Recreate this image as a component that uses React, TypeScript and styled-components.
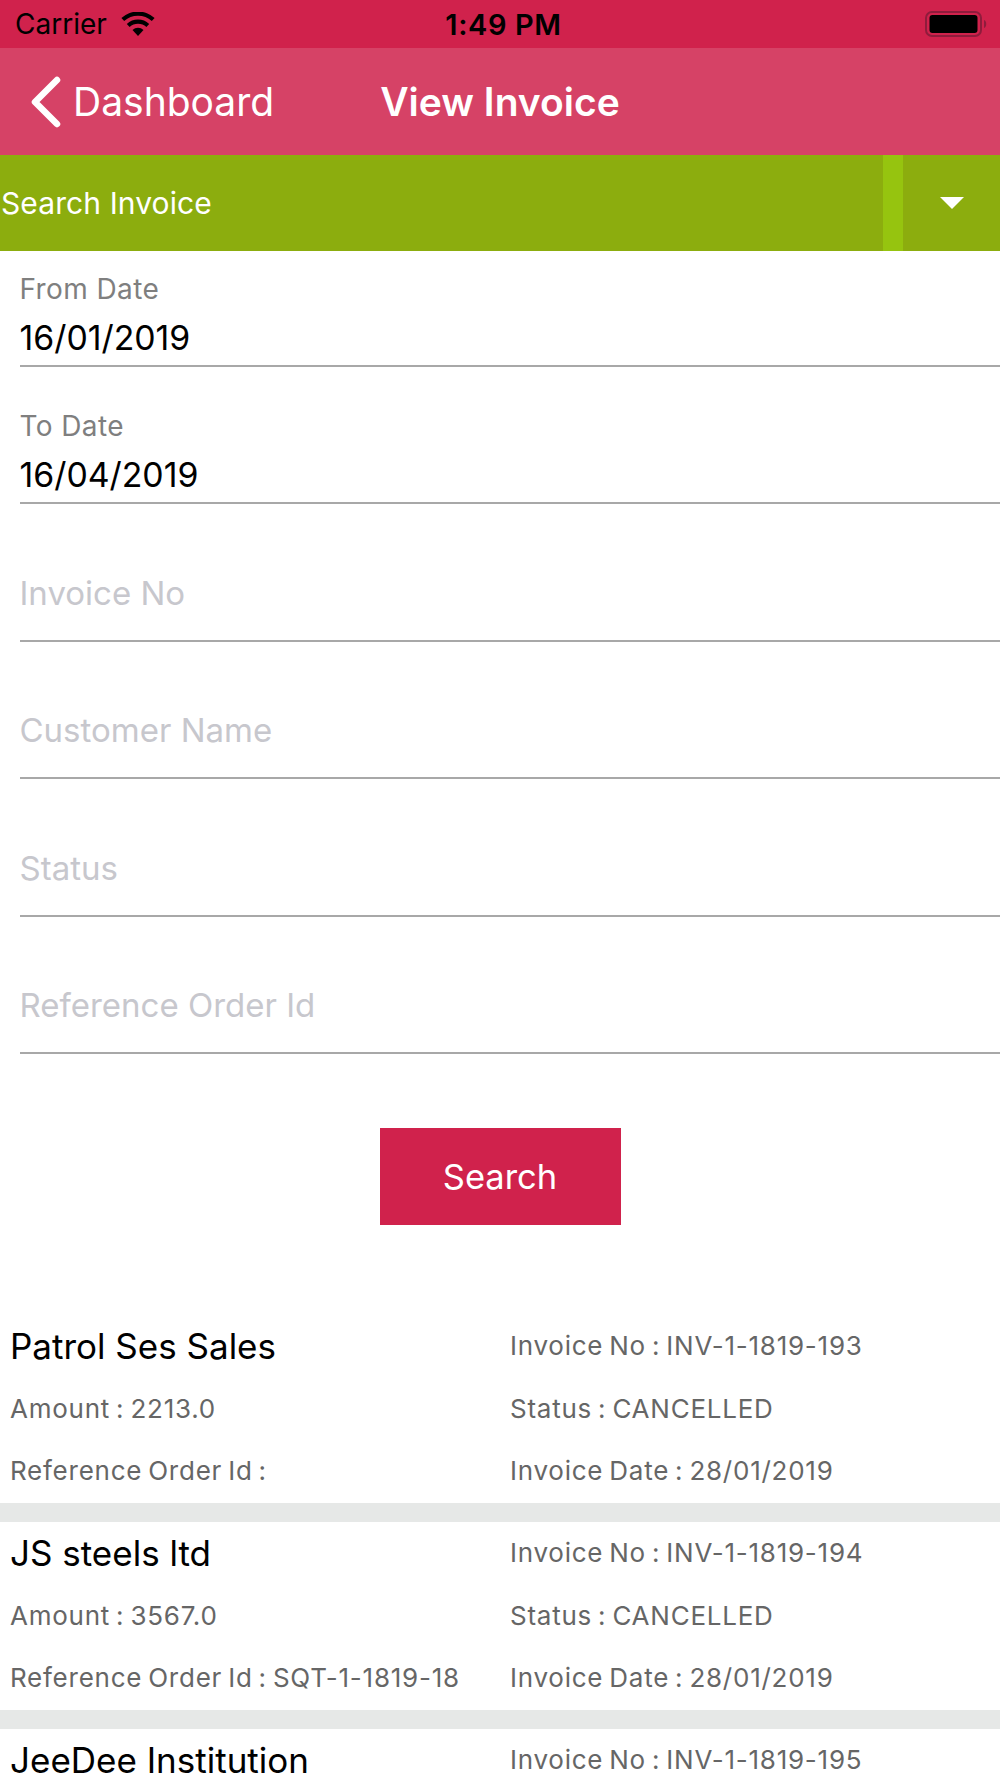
import React from 'react';
import styled, { createGlobalStyle } from 'styled-components';

const GlobalStyle = createGlobalStyle`
    html, body {
        margin: 0;
        padding: 0;
        background: #fff;
    }
    body {
        font-family: Inter, "Noto Sans", "Liberation Sans", sans-serif;
    }
    * {
        box-sizing: border-box;
    }
`;

const Screen = styled.div`
    width: 1000px;
    height: 1778px;
    overflow: hidden;
    background: #fff;
`;

const StatusBar = styled.div`
    height: 48px;
    display: grid;
    grid-template-columns: 1fr auto 1fr;
    align-items: center;
    padding: 0 8px 0 15px;
    background: #d0224c;
    color: #000;
    font-size: 28px;
`;

const Carrier = styled.div`
    display: flex;
    align-items: center;
    gap: 14px;
`;

const Clock = styled.div`
    font-weight: 600;
    font-size: 29px;
    letter-spacing: 0.6px;
`;

const Battery = styled.div`
    justify-self: end;
    display: flex;
    align-items: center;
    padding-right: 4px;
`;

const NavBar = styled.div`
    height: 107px;
    display: grid;
    grid-template-columns: 1fr auto 1fr;
    align-items: center;
    padding: 0 31px;
    background: #d64266;
    color: #fff;
`;

const BackLink = styled.div`
    display: flex;
    align-items: center;
    gap: 12px;
    font-size: 39px;
`;

const NavTitle = styled.div`
    font-size: 39px;
    font-weight: 600;
`;

const SearchHeader = styled.div`
    height: 96px;
    display: flex;
    align-items: stretch;
    background: #8cad0e;
    color: #fff;
    font-size: 30px;
    letter-spacing: 0.1px;
`;

const HeaderLabel = styled.div`
    flex: 1;
    display: flex;
    align-items: center;
    padding-left: 1px;
`;

const HeaderStrip = styled.div`
    width: 20px;
    background: #96c40f;
`;

const HeaderToggle = styled.div`
    width: 97px;
    display: flex;
    align-items: center;
    justify-content: center;
`;

const Caret = styled.div`
    width: 0;
    height: 0;
    border-left: 12px solid transparent;
    border-right: 12px solid transparent;
    border-top: 12px solid #fff;
`;

const Form = styled.div`
    padding-left: 19.5px;
`;

const Field = styled.div<{ $first?: boolean }>`
    height: ${(p) => (p.$first ? '115.5px' : '137.5px')};
    display: flex;
    flex-direction: column;
    justify-content: flex-end;
    border-bottom: 2px solid #a8a8a8;
    padding-bottom: 4px;
`;

const FieldLabel = styled.div`
    font-size: 28px;
    line-height: 36px;
    margin-bottom: 8px;
    letter-spacing: 0.4px;
    color: #7f7f7f;
`;

const FieldValue = styled.div<{ $placeholder?: boolean }>`
    font-size: ${(p) => (p.$placeholder ? '33px' : '33.8px')};
    line-height: 46px;
    color: ${(p) => (p.$placeholder ? '#c7c7cd' : '#000')};
    ${(p) => p.$placeholder && 'padding-bottom: 20px;'}
`;

const ButtonRow = styled.div`
    display: flex;
    justify-content: center;
    padding: 74px 0 90px;
`;

const SearchButton = styled.div`
    width: 241px;
    height: 97px;
    display: flex;
    align-items: center;
    justify-content: center;
    background: #d0224c;
    color: #fff;
    font-size: 34.5px;
`;

const InvoiceRow = styled.div`
    height: 207px;
    display: grid;
    grid-template-columns: 500px 1fr;
    grid-auto-rows: 62.5px;
    align-items: center;
    padding-left: 10px;
    border-bottom: 19px solid #e6e8e7;
`;

const Name = styled.div`
    font-size: 35px;
    padding-bottom: 1px;
    color: #000;
`;

const Detail = styled.div`
    font-size: 26px;
    letter-spacing: 0.75px;
    word-spacing: -2px;
    padding-bottom: 1px;
    color: #666;
    white-space: nowrap;
`;

const invoices = [
    { name: 'Patrol Ses Sales', no: 'INV-1-1819-193', amount: '2213.0', ref: '' },
    { name: 'JS steels ltd', no: 'INV-1-1819-194', amount: '3567.0', ref: 'SQT-1-1819-18' },
    { name: 'JeeDee Institution', no: 'INV-1-1819-195', amount: '', ref: '' },
];

const WifiIcon = () => (
    <svg width="34" height="25" viewBox="0 0 34 25">
        <path d="M17 24 L11.5 18 A8 8 0 0 1 22.5 18 Z" fill="#000" />
        <path d="M8.6 15 L5.8 12 A16.5 16.5 0 0 1 28.2 12 L25.4 15 A12.5 12.5 0 0 0 8.6 15 Z" fill="#000" />
        <path d="M3.2 9 L0.4 6 A24.5 24.5 0 0 1 33.6 6 L30.8 9 A20.5 20.5 0 0 0 3.2 9 Z" fill="#000" />
    </svg>
);

const BatteryIcon = () => (
    <svg width="64" height="28" viewBox="0 0 64 28">
        <rect x="2" y="2" width="55" height="24" rx="6" fill="none" stroke="#8f1c3c" strokeWidth="2" />
        <rect x="5.5" y="5" width="48" height="18" rx="3" fill="#000" />
        <path d="M60 10 C63 11 63 17 60 18 Z" fill="#8f1c3c" />
    </svg>
);

const BackIcon = () => (
    <svg width="30" height="52" viewBox="0 0 30 52">
        <path d="M26 4 L4 26 L26 48" fill="none" stroke="#fff" strokeWidth="6.5" strokeLinecap="round" strokeLinejoin="round" />
    </svg>
);

const App = () => {
    return (
        <Screen>
            <GlobalStyle />
            <StatusBar>
                <Carrier>
                    Carrier
                    <WifiIcon />
                </Carrier>
                <Clock>1:49 PM</Clock>
                <Battery>
                    <BatteryIcon />
                </Battery>
            </StatusBar>
            <NavBar>
                <BackLink>
                    <BackIcon />
                    Dashboard
                </BackLink>
                <NavTitle>View Invoice</NavTitle>
            </NavBar>
            <SearchHeader>
                <HeaderLabel>Search Invoice</HeaderLabel>
                <HeaderStrip />
                <HeaderToggle>
                    <Caret />
                </HeaderToggle>
            </SearchHeader>
            <Form>
                <Field $first>
                    <FieldLabel>From Date</FieldLabel>
                    <FieldValue>16/01/2019</FieldValue>
                </Field>
                <Field>
                    <FieldLabel>To Date</FieldLabel>
                    <FieldValue>16/04/2019</FieldValue>
                </Field>
                <Field>
                    <FieldValue $placeholder>Invoice No</FieldValue>
                </Field>
                <Field>
                    <FieldValue $placeholder>Customer Name</FieldValue>
                </Field>
                <Field>
                    <FieldValue $placeholder>Status</FieldValue>
                </Field>
                <Field>
                    <FieldValue $placeholder>Reference Order Id</FieldValue>
                </Field>
            </Form>
            <ButtonRow>
                <SearchButton>Search</SearchButton>
            </ButtonRow>
            {invoices.map((inv) => (
                <InvoiceRow key={inv.no}>
                    <Name>{inv.name}</Name>
                    <Detail>Invoice No : {inv.no}</Detail>
                    <Detail>Amount : {inv.amount}</Detail>
                    <Detail>Status : CANCELLED</Detail>
                    <Detail>Reference Order Id : {inv.ref}</Detail>
                    <Detail>Invoice Date : 28/01/2019</Detail>
                </InvoiceRow>
            ))}
        </Screen>
    );
};

export default App;
